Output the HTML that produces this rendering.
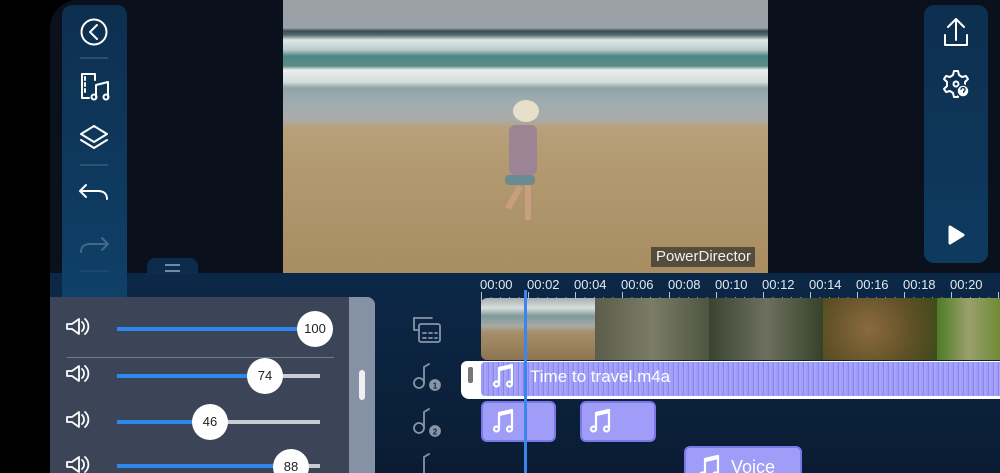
<!DOCTYPE html>
<html style="width:1000px;height:473px;overflow:hidden"><head><meta charset="utf-8"><style>
*{margin:0;padding:0;box-sizing:border-box}
body{width:1000px;height:473px;overflow:hidden;background:#000;font-family:"Liberation Sans",sans-serif;position:relative}
.abs{position:absolute}
.th{position:absolute;width:36px;height:36px;border-radius:50%;background:#fff;font-size:13px;line-height:36px;text-align:center;color:#222}
</style></head><body>
<div class="abs" style="left:50px;top:0;width:950px;height:273px;background:#0a101c;border-top-left-radius:28px"></div>
<div class="abs" style="left:0;top:273px;width:1000px;height:200px;background:linear-gradient(180deg,#0c2848,#0a1c33)"></div>
<div class="abs" style="left:0;top:0;width:50px;height:473px;background:#000"></div>

<div class="abs" style="left:62px;top:5px;width:65px;height:292px;background:linear-gradient(180deg,#0d2f4f,#0f4068);border-radius:10px 10px 0 0"></div>
<svg class="abs" style="left:62px;top:5px" width="65" height="292" fill="none" stroke="#fff" stroke-width="2" stroke-linecap="round" stroke-linejoin="round">
<circle cx="32" cy="27" r="12.5"/><path d="M35 20l-7 7 7 7"/>
<line x1="18" y1="53" x2="46" y2="53" stroke="#4b6b88" stroke-width="1"/>
<path d="M20 69h13v6M20 69v24h7M23 72v3M23 78v3M23 84v3"/>
<path d="M34 80l12-3v15M34 80v12"/><circle cx="32" cy="92" r="2.5"/><circle cx="44" cy="92" r="2.5"/>
<path d="M32 121l13 8-13 8-13-8z"/><path d="M19 135l13 8 13-8"/>
<line x1="18" y1="160" x2="46" y2="160" stroke="#4b6b88" stroke-width="1"/>
<path d="M24 180l-6 6 6 6M18 186h18c6 0 9 3 9 8"/>
<g stroke="#45688a"><path d="M40 233l6 6-6 6M46 239h-18c-6 0-9 3-9 8"/></g>
<line x1="18" y1="266" x2="46" y2="266" stroke="#2e4f70" stroke-width="1"/>
</svg>
<div class="abs" style="left:147px;top:258px;width:51px;height:16px;background:#0d2c4b;border-radius:8px 8px 0 0"></div>
<div class="abs" style="left:165px;top:264px;width:15px;height:2px;background:#6f8aa5"></div>
<div class="abs" style="left:165px;top:270px;width:15px;height:2px;background:#6f8aa5"></div>

<div class="abs" style="left:924px;top:5px;width:64px;height:258px;background:linear-gradient(180deg,#0d2f4f,#0f3a60);border-radius:10px"></div>
<svg class="abs" style="left:924px;top:5px" width="64" height="258" fill="none" stroke="#fff" stroke-width="2" stroke-linecap="round" stroke-linejoin="round">
<path d="M32 14v21M24 22l8-8 8 8M21 30v10h22V30"/>
<path d="M29 70l1-4h4l1 4 3 2 4-1 2 3-3 3v4l3 3-2 3-4-1-3 2-1 4h-4l-1-4-3-2-4 1-2-3 3-3v-4l-3-3 2-3 4 1z"/>
<circle cx="32" cy="79" r="2.5"/>
<circle cx="39" cy="86" r="6" fill="#fff" stroke="#0f3658" stroke-width="1.5"/>
<path d="M37 84.5a2 2 0 1 1 2.5 2v1" stroke="#0f3658" stroke-width="1.3"/>
<path d="M26 222l13 8-13 8z" fill="#fff" stroke-width="3"/>
</svg>

<div class="abs" style="left:283px;top:0;width:485px;height:273px;overflow:hidden;background:linear-gradient(180deg,#9da1a6 0,#9aa1a8 28px,#3c4b55 31px,#4f6a70 35px,#dfe6e6 40px,#b9cbc8 50px,#4d8584 56px,#5c8c88 66px,#e9efef 70px,#d4dddc 82px,#8fa2a6 88px,#9eacaf 100px,#a9acaa 120px,#b7a17b 127px,#b39a70 160px,#a88d63 272px)">
<div class="abs" style="left:230px;top:100px;width:26px;height:22px;border-radius:50%;background:#e6dfca"></div>
<div class="abs" style="left:226px;top:125px;width:28px;height:50px;background:#9d8495;border-radius:6px"></div>
<div class="abs" style="left:222px;top:175px;width:30px;height:10px;background:#6b8b92;border-radius:4px"></div>
<div class="abs" style="left:228px;top:185px;width:6px;height:25px;background:#c79e80;transform:rotate(30deg)"></div>
<div class="abs" style="left:242px;top:185px;width:6px;height:35px;background:#c79e80"></div>
<div class="abs" style="left:368px;top:247px;width:104px;height:20px;background:rgba(40,40,40,.65)"></div>
<div class="abs" style="left:373px;top:248px;font-size:15px;color:#f0f0f0">PowerDirector</div>
</div>

<div class="abs" style="left:50px;top:297px;width:325px;height:176px;background:#3c4558;border-top-right-radius:8px"></div>
<div class="abs" style="left:349px;top:297px;width:26px;height:176px;background:#8591a5;border-top-right-radius:8px"></div>
<div class="abs" style="left:359px;top:370px;width:6px;height:30px;background:#f0f0f0;border-radius:3px"></div>
<div class="abs" style="left:67px;top:357px;width:267px;height:1px;background:#717b8c"></div>
<svg class="abs" style="left:50px;top:297px" width="300" height="176" fill="none" stroke="#fff" stroke-width="1.8" stroke-linejoin="round" stroke-linecap="round">
<g id="sp"><path d="M17 27h5l7-5v15l-7-5h-5z"/><path d="M32 25a6 6 0 0 1 0 9M35 22a10 10 0 0 1 0 15"/></g>
<use href="#sp" y="47"/><use href="#sp" y="93"/><use href="#sp" y="138"/>
</svg>
<div class="abs" style="left:117px;top:327px;width:198px;height:4px;background:#2f86ec"></div>
<div class="abs" style="left:117px;top:374px;width:203px;height:4px;background:#c9ccd2"></div>
<div class="abs" style="left:117px;top:374px;width:148px;height:4px;background:#2f86ec"></div>
<div class="abs" style="left:117px;top:420px;width:203px;height:4px;background:#c9ccd2"></div>
<div class="abs" style="left:117px;top:420px;width:93px;height:4px;background:#2f86ec"></div>
<div class="abs" style="left:117px;top:464px;width:203px;height:4px;background:#c9ccd2"></div>
<div class="abs" style="left:117px;top:464px;width:174px;height:4px;background:#2f86ec"></div>
<div class="th" style="left:297px;top:311px">100</div>
<div class="th" style="left:247px;top:358px">74</div>
<div class="th" style="left:192px;top:404px">46</div>
<div class="th" style="left:273px;top:449px">88</div>

<div class="abs" style="left:480px;top:277px;font-size:13px;color:#e2e8ef;white-space:nowrap">
<span class="abs" style="left:0">00:00</span><span class="abs" style="left:47px">00:02</span><span class="abs" style="left:94px">00:04</span><span class="abs" style="left:141px">00:06</span><span class="abs" style="left:188px">00:08</span><span class="abs" style="left:235px">00:10</span><span class="abs" style="left:282px">00:12</span><span class="abs" style="left:329px">00:14</span><span class="abs" style="left:376px">00:16</span><span class="abs" style="left:423px">00:18</span><span class="abs" style="left:470px">00:20</span></div>
<div class="abs" style="left:481px;top:297px;width:519px;height:5px;background:repeating-linear-gradient(90deg,#8ea0b5 0 1px,transparent 1px 9.4px)"></div>
<div class="abs" style="left:481px;top:292px;width:519px;height:10px;background:repeating-linear-gradient(90deg,#b7c4d2 0 1px,transparent 1px 47px)"></div>

<svg class="abs" style="left:400px;top:300px" width="60" height="173" fill="none" stroke="#8895a6" stroke-width="1.8" stroke-linecap="round">
<rect x="19" y="24" width="21" height="18" rx="2"/><path d="M14 30v-12h18M14 30h5"/><path d="M23 33h3M29 33h3M35 33h2M23 38h3M29 38h3M35 38h2"/>
<circle cx="19" cy="83" r="5"/><path d="M24 83V67l5-3"/>
<circle cx="19" cy="128" r="5"/><path d="M24 128v-16l5-3"/>
<path d="M24 173v-16l5-3"/>
<circle cx="35" cy="85" r="5" fill="#8895a6"/><text x="35" y="88.5" font-size="8" font-weight="bold" fill="#0b2340" stroke="none" text-anchor="middle" font-family="Liberation Sans">1</text>
<circle cx="35" cy="131" r="5" fill="#8895a6"/><text x="35" y="134.5" font-size="8" font-weight="bold" fill="#0b2340" stroke="none" text-anchor="middle" font-family="Liberation Sans">2</text>
</svg>

<div class="abs" style="left:481px;top:298px;width:519px;height:62px;border-radius:6px 0 0 6px;overflow:hidden">
<div class="abs" style="left:0;top:0;width:114px;height:62px;background:linear-gradient(180deg,#a9adb0 0,#d8dfde 10px,#7d9a98 18px,#a8a9a6 28px,#a6906a 34px,#8e7552 62px)"></div>
<div class="abs" style="left:114px;top:0;width:114px;height:62px;background:linear-gradient(90deg,#5c5d4a,#7b7c66,#4e5640)"></div>
<div class="abs" style="left:228px;top:0;width:114px;height:62px;background:linear-gradient(90deg,#3b4330,#6d705e,#35422a)"></div>
<div class="abs" style="left:342px;top:0;width:114px;height:62px;background:radial-gradient(circle at 40% 50%,#8b6a40,#5f5025 60%,#3e4a1c)"></div>
<div class="abs" style="left:456px;top:0;width:63px;height:62px;background:linear-gradient(90deg,#4e7b25,#9aa06c,#6f8a36)"></div>
</div>

<div class="abs" style="left:461px;top:361px;width:539px;height:38px;background:#fff;border-radius:6px 0 0 8px"></div>
<div class="abs" style="left:468px;top:367px;width:5px;height:16px;background:#777;border-radius:2px"></div>
<div class="abs" style="left:481px;top:362px;width:519px;height:34px;background:repeating-linear-gradient(90deg,#9f9df8 0 2px,#8986ee 2px 3px,#a7a5fa 3px 5px);border-radius:4px 0 0 4px"></div>
<div class="abs" style="left:530px;top:367px;font-size:17px;color:#fff">Time to travel.m4a</div>

<div class="abs" style="left:481px;top:401px;width:75px;height:41px;background:#9f9df8;border:2px solid #7a77e8;border-radius:6px"></div>
<div class="abs" style="left:580px;top:401px;width:76px;height:41px;background:#9f9df8;border:2px solid #7a77e8;border-radius:6px"></div>
<div class="abs" style="left:684px;top:446px;width:118px;height:40px;background:#9f9df8;border:2px solid #7a77e8;border-radius:6px"></div>
<div class="abs" style="left:731px;top:457px;font-size:18px;color:#fff">Voice</div>
<svg class="abs" style="left:0;top:0" width="1000" height="473" fill="none" stroke="#fff" stroke-width="2.2" stroke-linecap="round" stroke-linejoin="round">
<defs><g id="nt2"><path d="M0 18V3l13-3v18M0 5l13-3"/><circle cx="-2.5" cy="19" r="2.5"/><circle cx="10.5" cy="19" r="2.5"/></g></defs>
<use href="#nt2" x="499" y="365"/>
<use href="#nt2" x="499" y="410"/><use href="#nt2" x="596" y="410"/><use href="#nt2" x="705" y="456"/>
</svg>

<div class="abs" style="left:524px;top:290px;width:3px;height:183px;background:#3a86ee"></div>
</body></html>
